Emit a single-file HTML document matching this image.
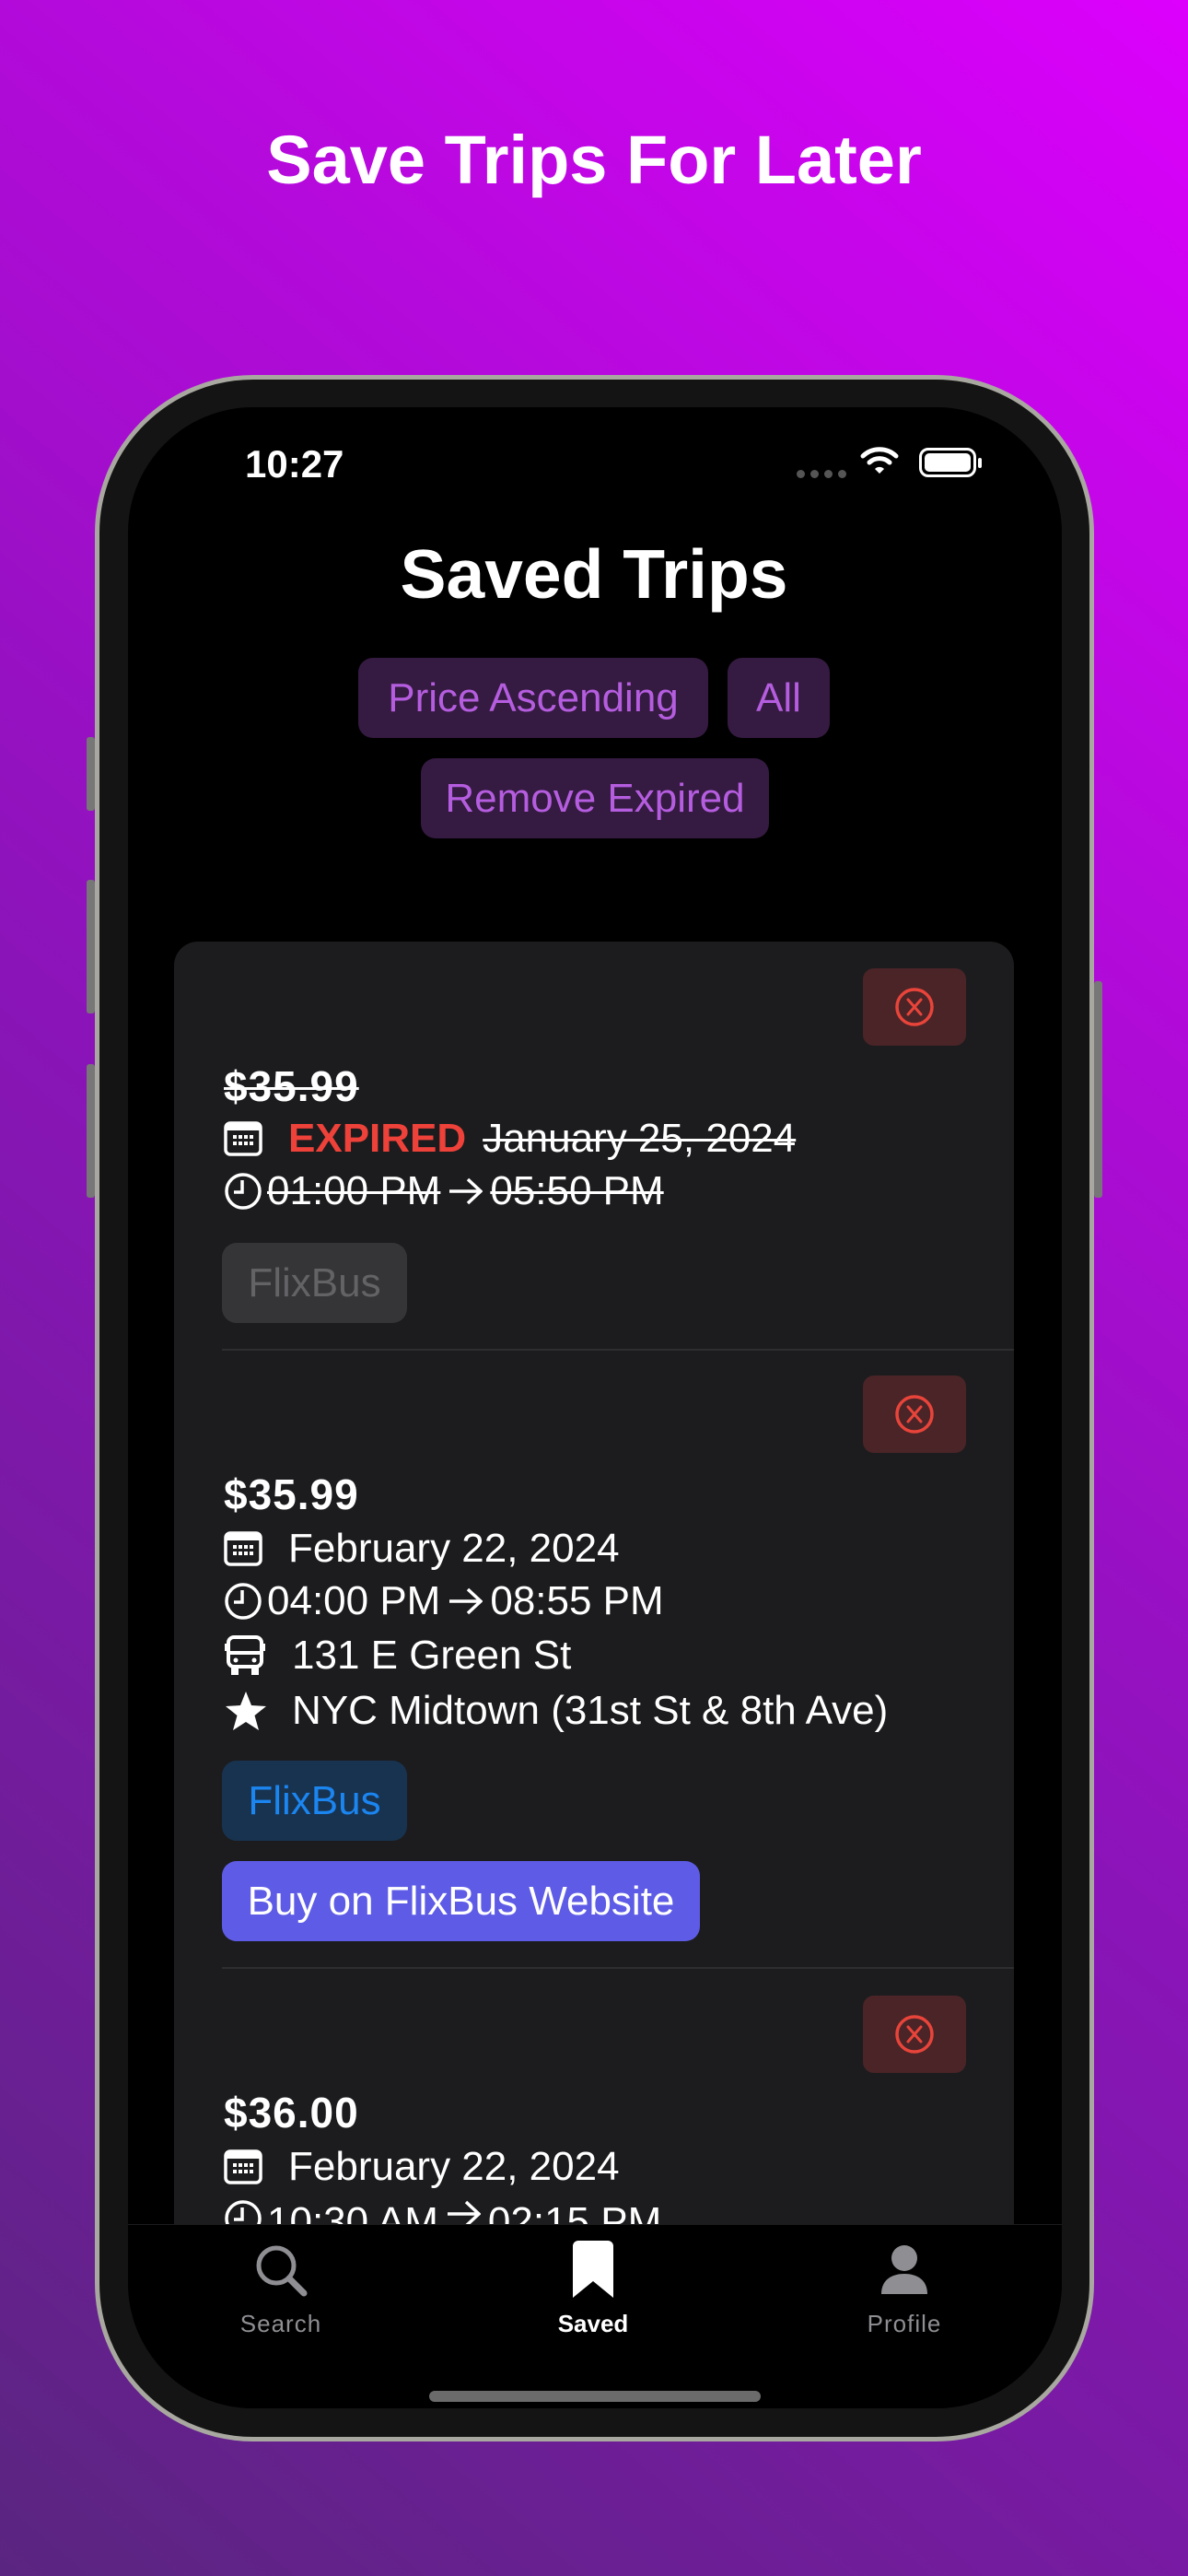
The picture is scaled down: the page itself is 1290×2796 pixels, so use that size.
<!DOCTYPE html>
<html><head><meta charset="utf-8"><style>
*{margin:0;padding:0;box-sizing:border-box}
body{width:1290px;height:2796px;overflow:hidden;background:linear-gradient(40deg,#5a2580 0%,#8a14b8 45%,#dc00fc 100%);font-family:"Liberation Sans",sans-serif;position:relative}
.a{position:absolute}
.t{position:absolute;white-space:nowrap;line-height:1}
.btn{position:absolute;border-radius:16px;display:flex;align-items:center;justify-content:center;font-size:44px}
.pur{background:#351a41;color:#b55ddf}
.xb{position:absolute;left:937px;width:112px;height:84px;background:#4a2427;border-radius:12px;display:flex;align-items:center;justify-content:center}
.row{position:absolute;left:243px;color:#fff;font-size:44px;display:flex;align-items:center;height:50px;white-space:nowrap}
.pr{font-weight:bold;font-size:46px;letter-spacing:1px}
.s{text-decoration:line-through;text-decoration-thickness:3px}
.ar{margin:0 8px;display:inline-block}
</style></head><body>
<div class="t" style="left:0;width:1290px;text-align:center;top:137px;font-size:74px;font-weight:bold;color:#fff">Save Trips For Later</div>

<!-- phone frame -->
<div class="a" style="left:103px;top:407px;width:1085px;height:2243px;border-radius:172px;background:#141414;border:5px solid #a8a8a0"></div>
<div class="a" style="left:94px;top:800px;width:9px;height:80px;background:#777;border-radius:3px"></div>
<div class="a" style="left:94px;top:955px;width:9px;height:145px;background:#777;border-radius:3px"></div>
<div class="a" style="left:94px;top:1155px;width:9px;height:145px;background:#777;border-radius:3px"></div>
<div class="a" style="left:1188px;top:1065px;width:9px;height:235px;background:#777;border-radius:3px"></div>
<div class="a" style="left:139px;top:442px;width:1014px;height:2172px;border-radius:136px;background:#000;overflow:hidden">
</div>

<!-- status -->
<div class="t" style="left:266px;top:483px;font-size:42px;color:#fff;font-weight:bold">10:27</div>
<div class="a" style="left:865px;top:510px;display:flex;gap:6px"><i style="width:9px;height:9px;border-radius:50%;background:#555;display:block"></i><i style="width:9px;height:9px;border-radius:50%;background:#555;display:block"></i><i style="width:9px;height:9px;border-radius:50%;background:#555;display:block"></i><i style="width:9px;height:9px;border-radius:50%;background:#555;display:block"></i></div>
<svg class="a" style="left:934px;top:484px" width="42" height="32" viewBox="0 0 42 32"><path d="M3 11 A26 26 0 0 1 39 11" stroke="#fff" stroke-width="5" fill="none" stroke-linecap="round"/><path d="M10 18 A16 16 0 0 1 32 18" stroke="#fff" stroke-width="5" fill="none" stroke-linecap="round"/><path d="M16 25 L21 30 L26 25 A7 7 0 0 0 16 25Z" fill="#fff"/></svg>
<div class="a" style="left:998px;top:486px;width:62px;height:32px;border:3px solid #fff;border-radius:10px;padding:3px"><div style="width:100%;height:100%;background:#fff;border-radius:5px"></div></div>
<div class="a" style="left:1062px;top:497px;width:4px;height:11px;background:#fff;border-radius:2px"></div>

<div class="t" style="left:0;width:1290px;text-align:center;top:586px;font-size:75px;font-weight:bold;color:#fff">Saved Trips</div>
<div class="btn pur" style="left:389px;top:714px;width:380px;height:87px">Price Ascending</div>
<div class="btn pur" style="left:790px;top:714px;width:111px;height:87px">All</div>
<div class="btn pur" style="left:457px;top:823px;width:378px;height:87px">Remove Expired</div>

<!-- card -->
<div class="a" style="left:189px;top:1022px;width:912px;height:1392px;background:#1c1c1e;border-radius:26px 26px 0 0"></div>

<svg width="0" height="0" style="position:absolute"><defs>
<g id="xi"><circle cx="22" cy="22" r="19" stroke="#e8443a" stroke-width="3.5" fill="none"/><path d="M15 14 L29 30 M29 14 L15 30" stroke="#e8443a" stroke-width="3" stroke-linecap="round"/></g>
<g id="cal"><rect x="2" y="3" width="38" height="34" rx="5" stroke="#fff" stroke-width="3.5" fill="none"/><rect x="2" y="3" width="38" height="8" fill="#fff"/><g fill="#fff"><rect x="10" y="16" width="4" height="4"/><rect x="16" y="16" width="4" height="4"/><rect x="22" y="16" width="4" height="4"/><rect x="28" y="16" width="4" height="4"/><rect x="10" y="23" width="4" height="4"/><rect x="16" y="23" width="4" height="4"/><rect x="22" y="23" width="4" height="4"/><rect x="28" y="23" width="4" height="4"/></g></g>
<g id="clk"><circle cx="21" cy="21" r="18" stroke="#fff" stroke-width="3.5" fill="none"/><path d="M20 9 V22 H11" stroke="#fff" stroke-width="3.5" fill="none"/></g>
<g id="arw"><path d="M2 16 H36 M22 3 L36 16 L22 29" stroke="#fff" stroke-width="3.5" fill="none"/></g>
</defs></svg>

<!-- trip 1 -->
<div class="xb" style="top:1051px"><svg width="44" height="44"><use href="#xi"/></svg></div>
<div class="row s pr" style="top:1154px">$35.99</div>
<div class="row" style="top:1211px"><svg width="42" height="40" style="margin-right:28px"><use href="#cal"/></svg><span style="color:#ee4139;font-weight:bold;margin-right:18px">EXPIRED</span><span class="s">January 25, 2024</span></div>
<div class="row" style="top:1268px"><svg width="42" height="42" style="margin-right:5px"><use href="#clk"/></svg><span class="s">01:00 PM</span><svg class="ar" width="38" height="32"><use href="#arw"/></svg><span class="s">05:50 PM</span></div>
<div class="btn" style="left:241px;top:1349px;width:201px;height:87px;background:#353537;color:#636366">FlixBus</div>
<div class="a" style="left:241px;top:1464px;width:860px;height:2px;background:#2e2e30"></div>

<!-- trip 2 -->
<div class="xb" style="top:1493px"><svg width="44" height="44"><use href="#xi"/></svg></div>
<div class="row pr" style="top:1597px">$35.99</div>
<div class="row" style="top:1656px"><svg width="42" height="40" style="margin-right:28px"><use href="#cal"/></svg>February 22, 2024</div>
<div class="row" style="top:1713px"><svg width="42" height="42" style="margin-right:5px"><use href="#clk"/></svg>04:00 PM<svg class="ar" width="38" height="32"><use href="#arw"/></svg>08:55 PM</div>
<div class="row" style="top:1772px"><svg width="48" height="46" viewBox="0 0 48 46" style="margin-right:26px"><rect x="5" y="3" width="36" height="32" rx="6" stroke="#fff" stroke-width="4" fill="none"/><path d="M5 20 H41" stroke="#fff" stroke-width="4"/><rect x="8" y="35" width="8" height="9" fill="#fff"/><rect x="30" y="35" width="8" height="9" fill="#fff"/><rect x="1" y="10" width="3" height="8" fill="#fff"/><rect x="42" y="10" width="3" height="8" fill="#fff"/><circle cx="13" cy="28" r="2.5" fill="#fff"/><circle cx="33" cy="28" r="2.5" fill="#fff"/></svg>131 E Green St</div>
<div class="row" style="top:1832px"><svg width="48" height="46" viewBox="0 0 48 46" style="margin-right:26px"><path d="M24 2 L30 17 L46 18 L33.5 28 L38 44 L24 35 L10 44 L14.5 28 L2 18 L18 17Z" fill="#fff"/></svg>NYC Midtown (31st St &amp; 8th Ave)</div>
<div class="btn" style="left:241px;top:1911px;width:201px;height:87px;background:#183350;color:#1b85f0">FlixBus</div>
<div class="btn" style="left:241px;top:2020px;width:519px;height:87px;background:#5e5ce6;color:#fff">Buy on FlixBus Website</div>
<div class="a" style="left:241px;top:2135px;width:860px;height:2px;background:#2e2e30"></div>

<!-- trip 3 -->
<div class="xb" style="top:2166px"><svg width="44" height="44"><use href="#xi"/></svg></div>
<div class="row pr" style="top:2268px">$36.00</div>
<div class="row" style="top:2327px"><svg width="42" height="40" style="margin-right:28px"><use href="#cal"/></svg>February 22, 2024</div>
<div class="row" style="top:2384px;height:30px;overflow:hidden;align-items:flex-start;padding-top:3px"><svg width="42" height="42" style="margin-right:5px"><use href="#clk"/></svg>10:30 AM<svg class="ar" width="38" height="32"><use href="#arw"/></svg>02:15 PM</div>

<!-- tab bar -->
<div class="a" style="left:139px;top:2414px;width:1014px;height:200px;background:#000;border-radius:0 0 136px 136px;border-top:1px solid #1c1c1e"></div>
<svg class="a" style="left:275px;top:2434px" width="62" height="62" viewBox="0 0 62 62"><circle cx="25" cy="25" r="19" stroke="#8e8e93" stroke-width="5" fill="none"/><path d="M39 39 L55 55" stroke="#8e8e93" stroke-width="7" stroke-linecap="round"/></svg>
<div class="t" style="left:205px;width:200px;text-align:center;top:2509px;font-size:26px;color:#8e8e93;letter-spacing:1px">Search</div>
<svg class="a" style="left:622px;top:2432px" width="44" height="64" viewBox="0 0 44 64"><path d="M6 0 H38 A6 6 0 0 1 44 6 V62 L22 44 L0 62 V6 A6 6 0 0 1 6 0Z" fill="#fff"/></svg>
<div class="t" style="left:544px;width:200px;text-align:center;top:2509px;font-size:26px;color:#fff;font-weight:bold">Saved</div>
<svg class="a" style="left:955px;top:2436px" width="54" height="56" viewBox="0 0 54 56"><circle cx="27" cy="15" r="14" fill="#8e8e93"/><path d="M2 54 C2 38 14 32 27 32 C40 32 52 38 52 54Z" fill="#8e8e93"/></svg>
<div class="t" style="left:882px;width:200px;text-align:center;top:2509px;font-size:26px;color:#8e8e93;letter-spacing:1px">Profile</div>
<div class="a" style="left:466px;top:2595px;width:360px;height:12px;background:#6b6b6b;border-radius:6px"></div>
</body></html>
